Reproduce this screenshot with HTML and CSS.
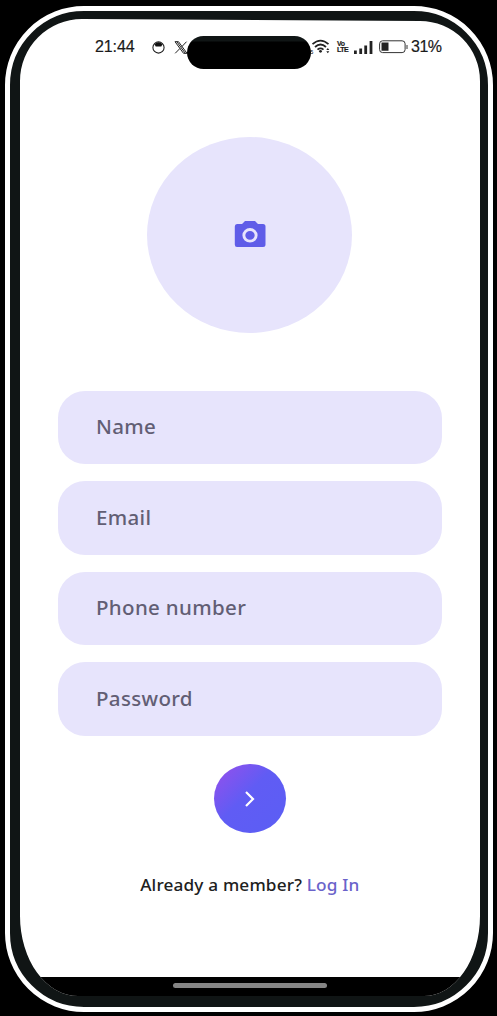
FILE: index.html
```html
<!DOCTYPE html>
<html lang="en">
<head>
<meta charset="utf-8">
<title>Sign up</title>
<link rel="stylesheet" href="styles.css">
</head>
<body>
<div class="phone">
  <main class="screen">
    <header class="status">
      <span class="time">21:44</span>
      <svg class="ball" viewBox="0 0 13 13"><circle cx="6.5" cy="6.5" r="5.6" fill="none" stroke="#222" stroke-width="1.1"/><path d="M2.500 3.200Q6.500-.8 10.500 3.200L9.300 5.400H3.700z" fill="#111"/></svg>
      <svg class="x-logo" viewBox="0 0 14 13"><path d="M1 .7h3.500l8.500 11.600H9.500zM12.500.7L7.700 5.800M6 7.400L1.200 12.300M2.800.7l8.500 11.600" fill="none" stroke="#222" stroke-width="1"/></svg>
      <span class="island"></span>
      <svg class="wifi" viewBox="0 0 21 16"><g fill="none" stroke="#222" stroke-width="1.800"><path d="M2.500 5.200Q10.500-2 18.500 5.200M5 8Q10.500 3 16 8M7.500 10.600Q10.500 8.200 13.500 10.600"/></g><circle cx="10.500" cy="12.300" r="1.400" fill="#222"/><text x="0" y="14.500" font-size="6">5</text><path d="M16.300 11l1.500-2 1.500 2zM16.300 12.300l1.500 2 1.500-2z" fill="#222"/></svg>
      <span class="volte"><b>Vo</b><b>LTE</b></span>
      <svg class="signal" viewBox="0 0 19 13"><path d="M0 9.500h2.800V13H0zM5.300 7.500h2.800V13H5.300zM10.300 4.500h2.800V13h-2.800zM15.600 0h2.800v13h-2.800z" fill="#222"/></svg>
      <svg class="battery" viewBox="0 0 29 14"><rect x=".6" y=".8" width="25.500" height="11.800" rx="3" fill="none" stroke="#333"/><path d="M2.500 2.600h7v8.200h-7z" fill="#222"/><path d="M28 5v4" stroke="#333"/></svg>
      <span class="percent">31%</span>
    </header>
    <div class="avatar">
      <svg viewBox="0 0 32 28"><path fill="#5f5ce8" fill-rule="evenodd" d="M11 1h10l3 3h5q2.500 0 2.500 2.500v18q0 2.500-2.500 2.500H3Q.8 27 .8 24.500v-18Q.8 4 3 4h5zM16 8a7.600 7.300 0 1 0 0 14.600A7.600 7.300 0 1 0 16 8zm0 2.900a4.700 4.400 0 1 1 0 8.800 4.700 4.400 0 1 1 0-8.800z"/></svg>
    </div>
    <form class="fields">
      <div class="field"><span>Name</span></div>
      <div class="field"><span>Email</span></div>
      <div class="field"><span>Phone number</span></div>
      <div class="field"><span>Password</span></div>
    </form>
    <div class="next"><svg viewBox="0 0 12 18"><path d="M2 2l7 7-7 7" fill="none" stroke="#fff" stroke-width="2.200"/></svg></div>
    <p class="login"><span>Already a member?</span> <a>Log In</a></p>
    <footer class="home"><span></span></footer>
  </main>
</div>
</body>
</html>
```
FILE: styles.css
```css
* { box-sizing: border-box; }
body { margin: 0; background: #000; padding: 6px 4px 4px 5px; height: 1016px; overflow: hidden; font-family: "Noto Sans", sans-serif; }
.phone { width: 488px; height: 1006px; border: 5px solid #fff; border-radius: 79px; background: #101515; padding: 8px 8px 11px 10px; }
.screen { width: 460px; height: 977px; background: #fff; display: flex; flex-direction: column; align-items: center;
  clip-path: path("M62 0 L400 2 A60 60 0 0 1 460 62 L460 897 A56 80 0 0 1 404 977 L58 977 A58 80 0 0 1 0 897 L0 62 A62 62 0 0 1 62 0 Z"); }
.status { display: flex; align-items: center; width: 100%; height: 56px; padding-left: 75px; font-family: "Liberation Sans", sans-serif; font-size: 16px; color: #1a1a1a; flex: none; -webkit-text-stroke: .2px #1a1a1a; }
.time { width: 57px; letter-spacing: -.1px; }
.ball { width: 13px; height: 13px; margin-right: 9px; }
.x-logo { width: 14px; height: 13px; }
.island { width: 124px; height: 33px; border-radius: 17px; background: linear-gradient(#101515 5px, #000 6px); margin: 10px 0 0 -1px; }
.wifi { width: 21px; height: 16px; margin: 0 6px 0 -1px; overflow: visible; }
.volte { width: 12px; margin-right: 5px; display: flex; flex-direction: column; font-size: 7px; line-height: 6px; letter-spacing: -.5px; }
.signal { width: 19px; height: 13px; margin-right: 6px; }
.battery { width: 29px; height: 14px; margin-right: 3px; }
.percent { letter-spacing: -.5px; }
.avatar { width: 205px; height: 196px; border-radius: 50%; background: #e7e4fc; margin: 62px 1px 0 0; display: flex; align-items: center; justify-content: center; flex: none; }
.avatar svg { width: 32px; height: 28px; margin-top: -3px; }
.fields { width: 384px; margin: 57.5px 0 0; display: grid; grid-auto-rows: 73.5px; gap: 17px; flex: none; }
.field { background: #e7e4fc; border-radius: 27px; padding: 0 0 0 38px; display: flex; align-items: center; font-size: 19px; font-weight: 500; color: #625e74; letter-spacing: .3px; }
.field span { transform: scaleX(1.08); transform-origin: left; }
.next { width: 72px; height: 69px; border-radius: 50%; margin-top: 28.5px; background: linear-gradient(135deg, #9250ec 5%, #605cf4 45%, #5b5ef4); display: flex; align-items: center; justify-content: center; flex: none; }
.next svg { width: 12px; height: 18px; }
.login { margin: 40px 0 0; font-size: 15.5px; font-weight: 500; line-height: 24px; letter-spacing: .15px; color: #202020; white-space: nowrap; transform: scaleX(1.11); }
.login a { color: #6a63ca; }
.home { width: 100%; height: 19px; margin-top: auto; background: #000; display: flex; justify-content: center; padding-top: 6px; flex: none; }
.home span { width: 154px; height: 5px; border-radius: 3px; background: #858585; }
```
